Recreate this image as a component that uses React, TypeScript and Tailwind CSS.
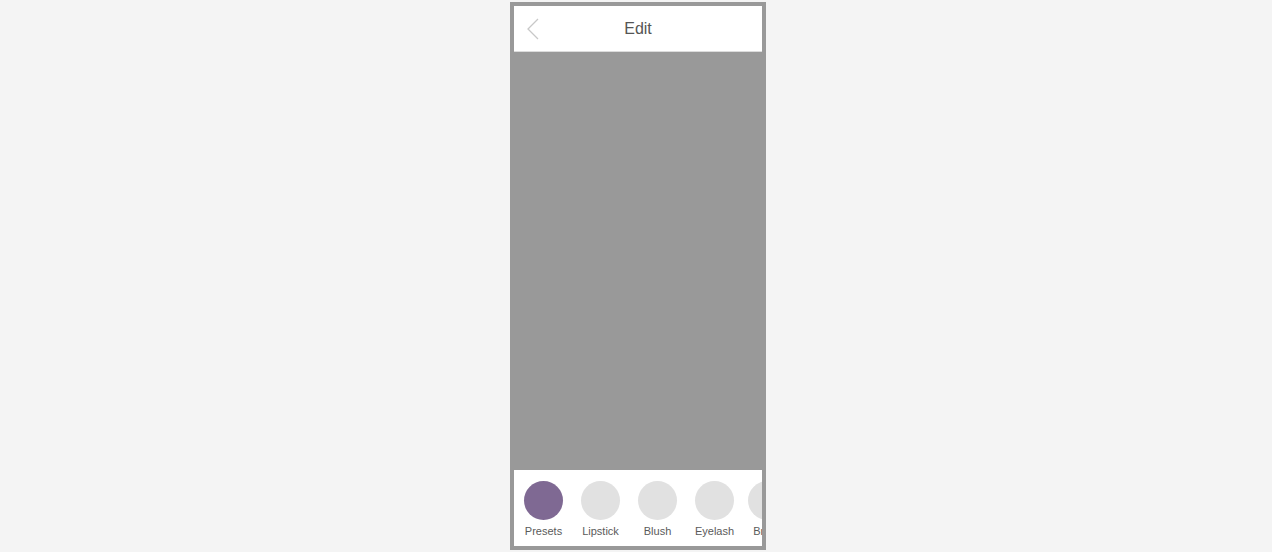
import React from "react";

const tools = [
  { label: "Presets", active: true },
  { label: "Lipstick" },
  { label: "Blush" },
  { label: "Eyelash" },
  { label: "Brush" },
];

export default function App() {
  return (
    <div
      className="flex h-[552px] w-full justify-center bg-[#f4f4f4] pt-[2px]"
      style={{ fontFamily: '"Helvetica Neue", "Liberation Sans", Arial, sans-serif' }}
    >
      <div className="ml-[4px] flex h-[548px] w-[256px] flex-col border-4 border-[#999999] bg-[#999999]">
        {/* header */}
        <div className="relative flex h-[46px] shrink-0 items-center justify-center border-b border-[#dcdcdc] bg-white">
          <button className="absolute left-[12px] top-[11px] h-[24px] w-[14px]">
            <svg viewBox="0 0 14 24" className="h-[24px] w-[14px]" fill="none">
              <path d="M12 2 L2 12 L12 22" stroke="#c8c8c8" strokeWidth="1.3" />
            </svg>
          </button>
          <span className="text-[16px] text-[#555555]">Edit</span>
        </div>

        {/* preview area */}
        <div className="flex-1 bg-[#999999]"></div>

        {/* tool bar */}
        <div className="flex h-[76px] shrink-0 overflow-hidden bg-white pl-[10px] pt-[11px]">
          {tools.map((t, i) => (
            <div
              key={t.label}
              className={`flex w-[39px] shrink-0 flex-col items-center ${
                i === 0 ? "" : i === 4 ? "ml-[14px]" : "ml-[18px]"
              }`}
            >
              <div
                className={`h-[39px] w-[39px] rounded-full ${
                  t.active ? "bg-[#7f6993]" : "bg-[#e1e1e1]"
                }`}
              ></div>
              <span className="mt-[5px] whitespace-nowrap text-[11px] leading-[13px] text-[#5a5a5a]">
                {t.label}
              </span>
            </div>
          ))}
        </div>
      </div>
    </div>
  );
}
